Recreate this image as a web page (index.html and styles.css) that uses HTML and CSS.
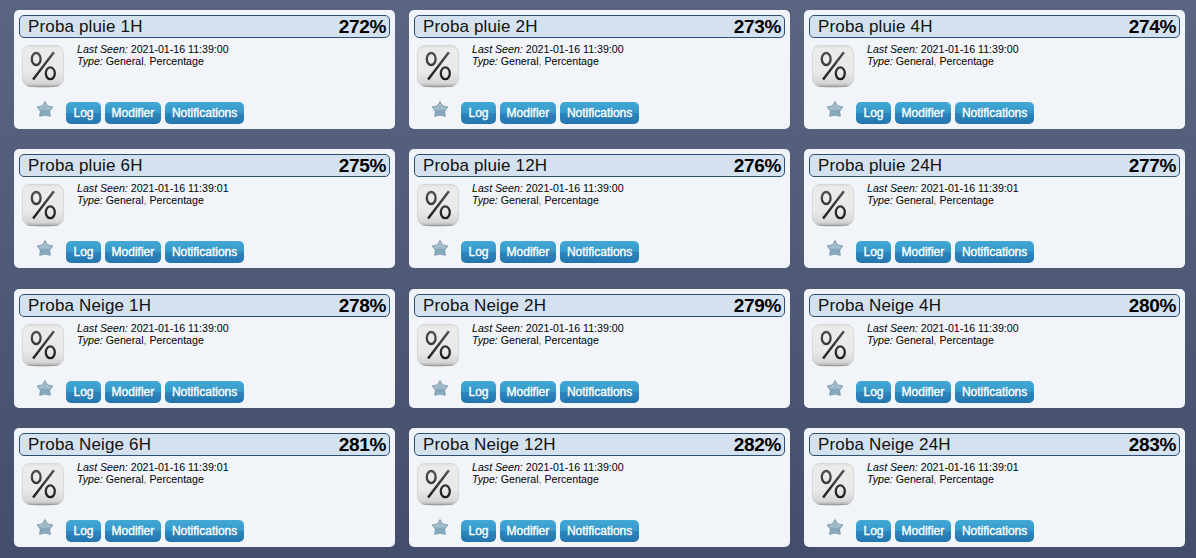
FILE: index.html
```html
<!DOCTYPE html>
<html lang="fr">
<head>
<meta charset="utf-8">
<title>Mesures</title>
<link rel="stylesheet" href="styles.css">
</head>
<body>
<svg class="defs" width="0" height="0" aria-hidden="true">
  <defs>
    <linearGradient id="tile" x1="0" y1="0" x2="0" y2="1">
      <stop offset="0" stop-color="#dcdcdc"/><stop offset=".08" stop-color="#ebebea"/><stop offset=".65" stop-color="#e8e9e8"/><stop offset=".93" stop-color="#d6d6d6"/><stop offset="1" stop-color="#b0b0b0"/>
    </linearGradient>
    <linearGradient id="ink" gradientUnits="userSpaceOnUse" x1="0" y1="10" x2="0" y2="38">
      <stop offset="0" stop-color="#505251"/><stop offset="1" stop-color="#1d1d1d"/>
    </linearGradient>
    <linearGradient id="steel" x1="0" y1="0" x2="0" y2="1">
      <stop offset="0" stop-color="#86a3b3"/><stop offset=".5" stop-color="#a0bccb"/><stop offset=".65" stop-color="#7fa3b7"/><stop offset="1" stop-color="#8cb4ca"/>
    </linearGradient>
    <filter id="soft" x="-20%" y="-200%" width="140%" height="500%"><feGaussianBlur stdDeviation="1.2 .6"/></filter>
  </defs>
  <symbol id="percent" viewBox="0 0 48 48">
    <ellipse cx="24" cy="44.3" rx="15" ry="1" fill="#888" filter="url(#soft)"/>
    <rect x="3.4" y="3.4" width="41.2" height="40.8" rx="7.5" fill="url(#tile)" stroke="#bbb" stroke-opacity=".6" stroke-width=".7"/>
    <g fill="none" stroke="url(#ink)">
      <ellipse cx="17.2" cy="17" rx="4.4" ry="6" stroke-width="2.3"/>
      <ellipse cx="31.3" cy="31.3" rx="4.5" ry="5.9" stroke-width="2.3"/>
      <path d="M34.9 10.2 14.1 37.6" stroke-width="2.4"/>
    </g>
  </symbol>
  <symbol id="star" viewBox="0 0 18 18">
    <path d="M9 .6 11.5 4.9 16.8 6 13.6 10.2 14.3 15.3 9 14.1 3.7 15.3 4.4 10.2 1.2 6 6.5 4.9Z" fill="url(#steel)" stroke="#7895a6" stroke-width=".9" stroke-linejoin="round"/>
    <path d="M9 2.5 7.2 6.1 3.5 6.8M9 2.5l1.8 3.6 3.7.7" fill="none" stroke="#c0d3dd" stroke-width=".6"/>
  </symbol>
</svg>
<main class="grid" id="devices"></main>
<template id="card">
  <article class="card">
    <header class="card-head"><span class="name"></span><strong class="value"></strong></header>
    <div class="info">
      <svg class="percent"><use href="#percent"/></svg>
      <div class="details">
        <div><i>Last Seen:</i> <span class="seen"></span></div>
        <div><i>Type:</i> General<em>,</em> Percentage</div>
      </div>
    </div>
    <footer class="actions">
      <svg class="star"><use href="#star"/></svg>
      <a class="btn">Log</a><a class="btn">Modifier</a><a class="btn">Notifications</a>
    </footer>
  </article>
</template>
<script src="script.js"></script>
</body>
</html>
```
FILE: script.js
```js
const devices = [
  ["Proba pluie 1H", 272, "00"], ["Proba pluie 2H", 273, "00"], ["Proba pluie 4H", 274, "00"],
  ["Proba pluie 6H", 275, "01"], ["Proba pluie 12H", 276, "00"], ["Proba pluie 24H", 277, "01"],
  ["Proba Neige 1H", 278, "00"], ["Proba Neige 2H", 279, "00"], ["Proba Neige 4H", 280, "00"],
  ["Proba Neige 6H", 281, "01"], ["Proba Neige 12H", 282, "00"], ["Proba Neige 24H", 283, "01"]
];
const grid = document.getElementById("devices");
const template = document.getElementById("card");
for (const [name, value, seconds] of devices) {
  const card = template.content.cloneNode(true);
  card.querySelector(".name").textContent = name;
  card.querySelector(".value").textContent = value + "%";
  card.querySelector(".seen").textContent = "2021-01-16 11:39:" + seconds;
  grid.append(card);
}
```
FILE: styles.css
```css
* { box-sizing: border-box; }
html { height: 100%; }
body {
  margin: 0;
  height: 558px;
  overflow: hidden;
  background: linear-gradient(#5a6582, #434e6c);
  font-family: "Liberation Sans", Arial, sans-serif;
  color: #000;
}
.defs { position: absolute; }
.grid {
  display: grid;
  grid-template-columns: repeat(3, 381px);
  column-gap: 14px;
  row-gap: 20.4px;
  padding: 10px 0 0 14px;
}
.card {
  display: flex;
  flex-direction: column;
  height: 119px;
  padding: 5px;
  border-radius: 5px;
  background: #f1f4f9;
}
.card-head {
  display: flex;
  justify-content: space-between;
  align-items: center;
  height: 23px;
  padding: 0 3px 0 8px;
  border: 1px solid #2c4f74;
  border-radius: 5px;
  background: #d4e1ee;
  line-height: 21px;
}
.name { font-size: 17px; letter-spacing: .15px; color: #111; }
.value { font-size: 19px; letter-spacing: -.35px; }
.info { display: flex; height: 50px; }
.percent { width: 48px; height: 48px; margin-top: 4px; }
.details { padding: 5px 0 0 10px; font-size: 10.63px; line-height: 12px; }
.details em { color: #777; font-style: normal; }
.actions { display: flex; align-items: flex-start; padding-top: 14px; }
.star { width: 18px; height: 18px; margin: -1px 12px 0 17px; }
.btn {
  height: 22px;
  min-width: 35px;
  margin-right: 3.6px;
  padding: 0 7px;
  border-radius: 5px;
  background: linear-gradient(#44a8d5, #359aca 48%, #2c86bd 52%, #2475ae);
  color: #fff;
  font-size: 12px;
  line-height: 22px;
  text-align: center;
  -webkit-text-stroke: .35px #fff;
}
```
